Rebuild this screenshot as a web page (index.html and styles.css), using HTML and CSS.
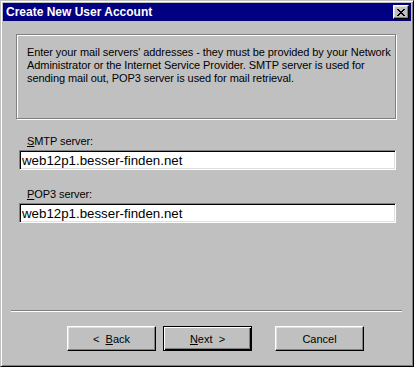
FILE: index.html
```html
<!DOCTYPE html>
<html lang="en">
<head>
    <meta charset="UTF-8">
    <title>Create New User Account</title>
    <link rel="stylesheet" href="styles.css">
</head>
<body>

    <div class="window">
        <!-- Title Bar -->
        <div class="title-bar">
            <span class="title-text">Create New User Account</span>
            <button class="close-btn" title="Close">
                <svg width="8" height="7" viewBox="0 0 8 7" shape-rendering="crispEdges">
                    <path fill="#000" d="M0 0h2v1h-2zM6 0h2v1h-2zM1 1h2v1h-2zM5 1h2v1h-2zM2 2h4v1h-4zM3 3h2v1h-2zM2 4h4v1h-4zM1 5h2v1h-2zM5 5h2v1h-2zM0 6h2v1h-2zM6 6h2v1h-2z"/>
                </svg>
            </button>
        </div>

        <!-- Wizard Page -->
        <div class="page">
            <div class="info-box">
                <p>Enter your mail servers' addresses - they must be provided by your Network Administrator or the Internet Service Provider. SMTP server is used for sending mail out, POP3 server is used for mail retrieval.</p>
            </div>

            <div class="fields">
                <div class="field">
                    <label for="smtp"><u>S</u>MTP server:</label>
                    <input id="smtp" type="text" value="web12p1.besser-finden.net">
                </div>
                <div class="field">
                    <label for="pop3"><u>P</u>OP3 server:</label>
                    <input id="pop3" type="text" value="web12p1.besser-finden.net">
                </div>
            </div>

            <!-- Buttons -->
            <div class="footer">
                <div class="separator"></div>
                <div class="btn-row">
                    <button class="btn">&lt;&nbsp; <u>B</u>ack</button>
                    <button class="btn default"><u>N</u>ext &nbsp;&gt;</button>
                    <button class="btn cancel">Cancel</button>
                </div>
            </div>
        </div>
    </div>

</body>
</html>
```

FILE: styles.css
```css
:root {
    --face: #c0c0c0;
    --light: #dfdfdf;
    --shadow: #808080;
    --dark: #000000;
    --title: #000080;
}
body {
    margin: 0;
    background-color: var(--face);
    font-family: 'Liberation Sans', Arial, sans-serif;
    font-size: 11px;
    color: #000;
}
/* --- Window frame --- */
.window {
    box-sizing: border-box;
    width: 414px;
    height: 367px;
    padding: 2px;
    background-color: var(--face);
    border: 1px solid;
    border-color: var(--face) var(--dark) var(--dark) var(--face);
    box-shadow: inset 1px 1px #fff, inset -1px -1px var(--shadow);
    display: flex;
    flex-direction: column;
}
.title-bar {
    height: 18px;
    background-color: var(--title);
    display: flex;
    justify-content: space-between;
    align-items: center;
    padding: 0 2px 0 3px;
}
.title-text {
    color: #fff;
    font-weight: bold;
    font-size: 12px;
}
.close-btn {
    box-sizing: border-box;
    width: 16px;
    height: 14px;
    padding: 0;
    background-color: var(--face);
    border: 1px solid;
    border-color: #fff var(--dark) var(--dark) #fff;
    box-shadow: inset -1px -1px var(--shadow), inset 1px 1px var(--light);
    display: flex;
    justify-content: center;
    align-items: center;
}

/* --- Page --- */
.page {
    flex: 1;
    display: flex;
    flex-direction: column;
    padding-top: 13px;
}
.info-box {
    box-sizing: border-box;
    width: 380px;
    height: 85px;
    margin-left: 13px;
    border: 1px solid var(--shadow);
    box-shadow: inset 1px 1px #fff, 1px 1px #fff;
    padding: 11px 2px 0 10px;
}
.info-box p {
    margin: 0;
    line-height: 13px;
    letter-spacing: -0.08px;
}
.fields {
    display: flex;
    flex-direction: column;
    gap: 18px;
    margin: 16px 0 0 16px;
    width: 377px;
}
.field {
    display: flex;
    flex-direction: column;
}
.field label {
    line-height: 13px;
    padding-left: 8px;
    margin-bottom: 2px;
    letter-spacing: -0.08px;
}
.field input {
    box-sizing: border-box;
    height: 20px;
    margin: 0;
    padding: 0 2px;
    font-family: 'Liberation Sans', Arial, sans-serif;
    font-size: 13.3px;
    color: #000;
    background-color: #fff;
    border: 1px solid;
    border-color: var(--shadow) #fff #fff var(--shadow);
    box-shadow: inset 1px 1px var(--dark), inset -1px -1px var(--light);
    outline: none;
}

/* --- Footer --- */
.footer { margin-top: auto; padding-bottom: 13px; }
.separator {
    height: 0;
    margin: 0 9px 0 8px;
    border-top: 1px solid var(--shadow);
    border-bottom: 1px solid #fff;
}
.btn-row {
    display: flex;
    gap: 7px;
    padding-left: 64px;
    margin-top: 14px;
}
.btn {
    box-sizing: border-box;
    width: 89px;
    height: 25px;
    padding: 0;
    font-family: 'Liberation Sans', Arial, sans-serif;
    font-size: 11px;
    color: #000;
    background-color: var(--face);
    border: 1px solid;
    border-color: #fff var(--dark) var(--dark) #fff;
    box-shadow: inset -1px -1px var(--shadow), inset 1px 1px var(--light);
}
.btn.default {
    border: 1px solid var(--dark);
    box-shadow: inset 1px 1px #fff, inset -1px -1px var(--dark), inset -2px -2px var(--shadow);
}
.btn.cancel { margin-left: 16px; }
```
